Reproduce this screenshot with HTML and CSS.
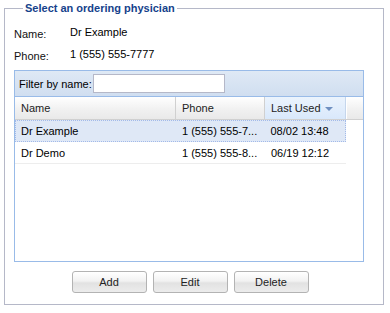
FILE: index.html
```html
<!DOCTYPE html>
<html lang="en">
<head>
  <meta charset="UTF-8">
  <meta name="viewport" content="width=device-width, initial-scale=1.0">
  <title>Ordering Physician</title>
  <link rel="stylesheet" href="styles.css">
</head>
<body>
  <fieldset class="physician-set">
    <legend>Select an ordering physician</legend>
    <div class="info-row">
      <span class="info-label">Name:</span>
      <span class="info-value">Dr Example</span>
    </div>
    <div class="info-row">
      <span class="info-label">Phone:</span>
      <span class="info-value">1 (555) 555-7777</span>
    </div>

    <div class="grid-panel">
      <div class="grid-toolbar">
        <label for="filter-name">Filter by name:</label>
        <input type="text" id="filter-name">
      </div>
      <div class="grid-header">
        <div class="col col-name">Name</div>
        <div class="col col-phone">Phone</div>
        <div class="col col-used sorted">Last Used <span class="sort-arrow"></span></div>
        <div class="col col-fill"></div>
      </div>
      <div class="grid-body">
        <div class="grid-row selected">
          <div class="col col-name">Dr Example</div>
          <div class="col col-phone">1 (555) 555-7...</div>
          <div class="col col-used">08/02 13:48</div>
        </div>
        <div class="grid-row">
          <div class="col col-name">Dr Demo</div>
          <div class="col col-phone">1 (555) 555-8...</div>
          <div class="col col-used">06/19 12:12</div>
        </div>
      </div>
    </div>

    <div class="button-bar">
      <button>Add</button>
      <button>Edit</button>
      <button>Delete</button>
    </div>
  </fieldset>
</body>
</html>
```

FILE: styles.css
```css
body {
  margin: 0;
  padding: 2px 6px 0 4px;
  font-family: "Liberation Sans", Tahoma, Arial, sans-serif;
  font-size: 11px;
  color: #000;
  background: #ffffff;
}

.physician-set {
  margin: 0;
  height: 303px;
  box-sizing: border-box;
  border: 1px solid #b5b8c8;
  padding: 6px 9px 0 9px;
}

.physician-set legend {
  font-family: "Liberation Sans", Arial, sans-serif;
  font-weight: bold;
  font-size: 11px;
  color: #15428b;
  padding: 0 2px;
  margin-left: 9px;
  line-height: 13px;
}

.info-row {
  display: flex;
  align-items: center;
  height: 22px;
}

.info-label {
  width: 56px;
  padding-top: 3px;
  color: #111;
}

.info-value {
  padding-bottom: 1px;
}

.grid-panel {
  margin-top: 5px;
  width: 350px;
  height: 192px;
  box-sizing: border-box;
  border: 1px solid #99bbe8;
  display: flex;
  flex-direction: column;
  font-family: "Liberation Sans", Arial, sans-serif;
  font-size: 11px;
}

.grid-toolbar {
  height: 26px;
  box-sizing: border-box;
  display: flex;
  align-items: center;
  gap: 1px;
  padding-left: 4px;
  background: linear-gradient(#dfe9f5, #d0def0);
  border-bottom: 1px solid #99bbe8;
}

.grid-toolbar input {
  width: 132px;
  height: 19px;
  box-sizing: border-box;
  border: 1px solid #b5b8c8;
  padding: 0 2px;
  margin: 0;
  background: #fff;
}

.grid-header {
  display: flex;
  height: 23px;
  box-sizing: border-box;
  background: linear-gradient(#ffffff, #f0f0f0 60%, #e9e9e9);
  border-bottom: 1px solid #d0d0d0;
}

.col {
  box-sizing: border-box;
  padding-left: 6px;
  display: flex;
  align-items: center;
  white-space: nowrap;
  overflow: hidden;
}

.col-name { width: 161px; }
.col-phone { width: 89px; }
.col-used { width: 81px; }
.col-fill { flex: 1; }

.grid-header .col {
  border-right: 1px solid #d0d0d0;
  color: #222;
}

.grid-header .col-fill {
  border-right: none;
  border-left: 1px solid #fff;
}

.grid-header .sorted {
  background: linear-gradient(#ebf3fd, #d9e8fb);
  border-right: 1px solid #c5d6ec;
}

.sort-arrow {
  display: inline-block;
  margin-left: 4px;
  margin-top: 2px;
  border-left: 4px solid transparent;
  border-right: 4px solid transparent;
  border-top: 4px solid #6f8fc0;
}

.grid-body {
  flex: 1;
  background: #fff;
}

.grid-row {
  display: flex;
  height: 22px;
  width: 331px;
  box-sizing: border-box;
  border-bottom: 1px solid #ededed;
}

.grid-row .col {
  color: #000;
}

.grid-row.selected {
  background: #dfe8f6;
  border: 1px dotted #a3bae9;
}

.grid-row.selected .col-name {
  padding-left: 5px;
}

.button-bar {
  display: flex;
  justify-content: center;
  gap: 6px;
  margin-top: 9px;
  padding-right: 8px;
}

.button-bar button {
  width: 75px;
  height: 22px;
  font-family: "Liberation Sans", Arial, sans-serif;
  font-size: 11px;
  color: #222;
  border: 1px solid #b3b3b3;
  border-radius: 3px;
  background: linear-gradient(#ffffff, #f2f2f2 45%, #e2e2e2 55%, #ececec);
  cursor: pointer;
}
```
